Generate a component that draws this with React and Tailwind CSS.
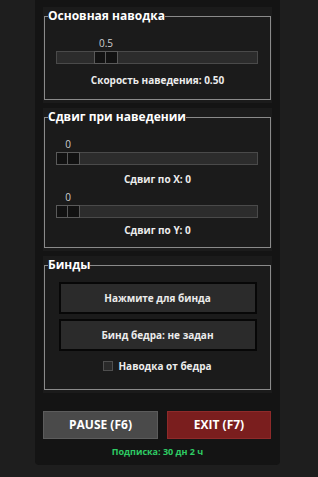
import React from "react";

const font = { fontFamily: '"Open Sans", "Noto Sans", sans-serif' };

function Slider({ label, offset }) {
  return (
    <div className="ml-[11px] w-[202px]">
      <div className="relative h-[12px]">
        <div
          className="absolute top-0 w-[24px] text-center text-[10px] leading-[12px] text-[#cfcfcf]"
          style={{ left: offset }}
        >
          {label}
        </div>
      </div>
      <div className="relative mt-[2px] h-[13px] border border-[#4a4a4a] bg-[#2c2c2c]">
        <div
          className="absolute top-[-1px] flex h-[13px] w-[24px]"
          style={{ left: offset - 1 }}
        >
          <div className="h-full w-[12px] border border-[#5a5a5a] bg-[#121212]" />
          <div className="h-full w-[12px] border border-l-0 border-[#5a5a5a] bg-[#121212]" />
        </div>
      </div>
    </div>
  );
}

function Section({ title, children, className }) {
  return (
    <div className="bg-[#1b1b1b] px-[1px] pt-[1px] pb-[3px]">
      <fieldset className={"border border-[#8a8a8a] " + className}>
        <legend className="ml-[3px] px-0 text-[12px] font-bold leading-[16px] text-white">
          {title}
        </legend>
        {children}
      </fieldset>
    </div>
  );
}

export default function App() {
  return (
    <div className="min-h-[477px] w-[318px] bg-[#1e1e1e]" style={font}>
      <div className="ml-[35px] w-[245px] rounded-b-[4px] bg-[#141414] px-[8px] pt-[7px] pb-[6px]">
        <div className="flex flex-col gap-[5px]">
          <Section title="Основная наводка" className="pb-[12px]">
            <div className="mt-[13px]">
              <Slider label="0.5" offset={38} />
            </div>
            <div className="mt-[9px] text-center text-[10px] font-bold leading-[14px] text-[#ececec]">
              Скорость наведения: 0.50
            </div>
          </Section>

          <Section title="Сдвиг при наведении" className="pb-[10px]">
            <div className="mt-[13px]">
              <Slider label="0" offset={0} />
            </div>
            <div className="mt-[7px] text-center text-[10px] font-bold leading-[14px] text-[#ececec]">
              Сдвиг по X: 0
            </div>
            <div className="mt-[5px]">
              <Slider label="0" offset={0} />
            </div>
            <div className="mt-[5px] text-center text-[10px] font-bold leading-[14px] text-[#ececec]">
              Сдвиг по Y: 0
            </div>
          </Section>

          <Section title="Бинды" className="pb-[16px]">
            <div className="mt-[9px] flex flex-col items-center gap-[5px]">
              <button className="h-[32px] w-[198px] border-2 border-[#070707] bg-[#2b2b2b] text-[10px] font-bold text-[#ececec]">
                Нажмите для бинда
              </button>
              <button className="h-[32px] w-[198px] border-2 border-[#070707] bg-[#2b2b2b] text-[10px] font-bold text-[#ececec]">
                Бинд бедра: не задан
              </button>
            </div>
            <div className="mt-[8px] flex h-[14px] items-center justify-center gap-[5px]">
              <div className="h-[10px] w-[10px] border border-[#4f4f4f] bg-[#2a2a2a]" />
              <span className="text-[10px] font-bold leading-[14px] text-[#ececec]">
                Наводка от бедра
              </span>
            </div>
          </Section>
        </div>

        <div className="mt-[18px] flex gap-[9px]">
          <button className="h-[28px] w-[115px] border border-[#5c5c5c] bg-[#4a4a4a] text-[12px] font-bold text-white">
            PAUSE (F6)
          </button>
          <button className="h-[28px] w-[104px] border border-[#8e2a2a] bg-[#7a1e1e] text-[12px] font-bold text-white">
            EXIT (F7)
          </button>
        </div>
        <div className="mt-[6px] text-center text-[9px] font-bold leading-[14px] text-[#2ecc64]">
          Подписка: 30 дн 2 ч
        </div>
      </div>
    </div>
  );
}
